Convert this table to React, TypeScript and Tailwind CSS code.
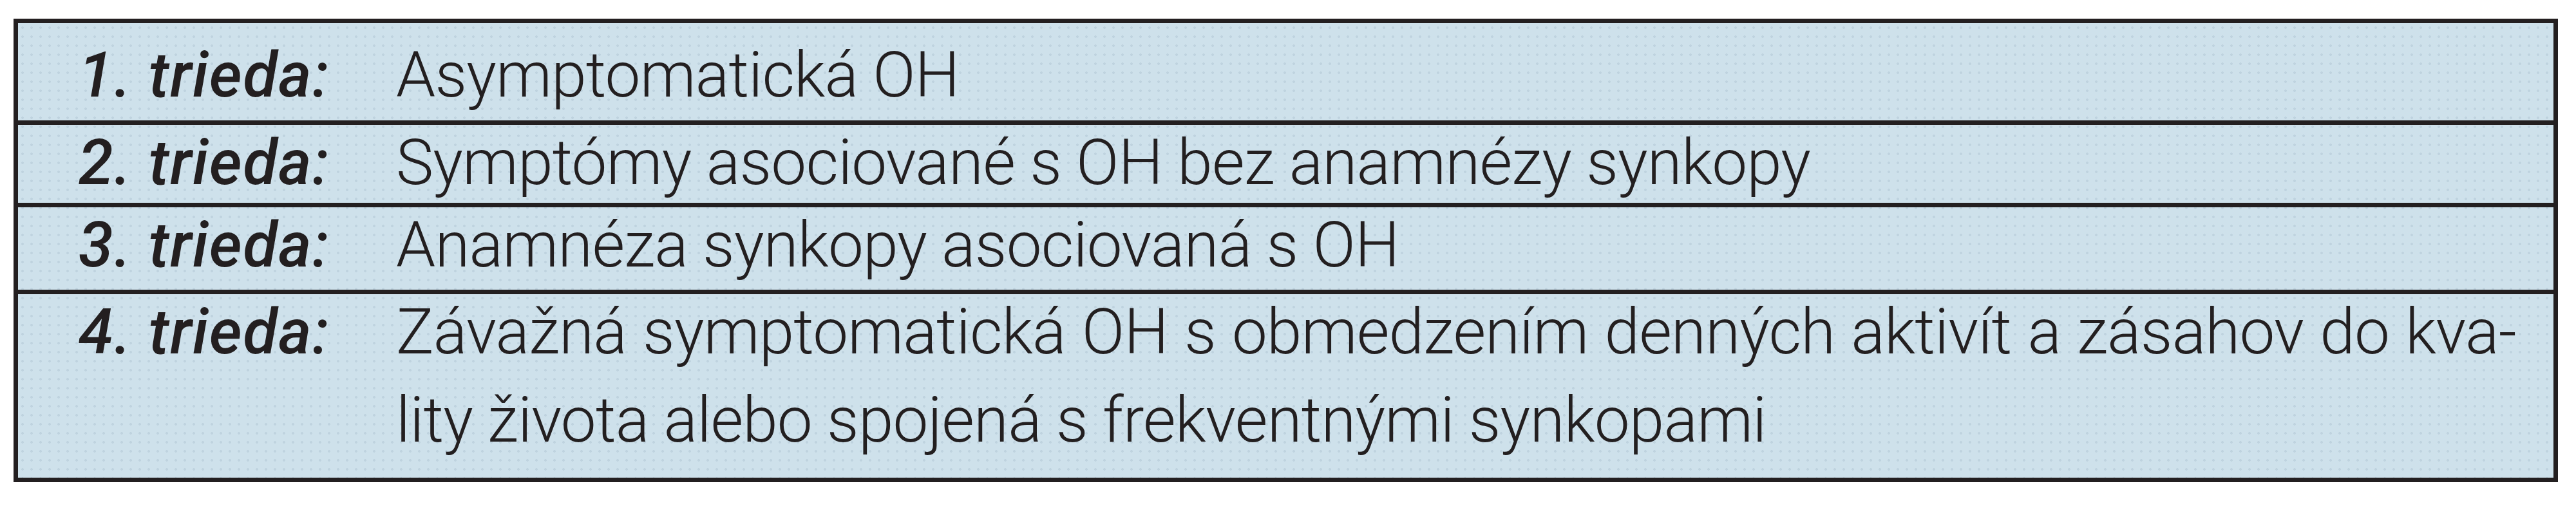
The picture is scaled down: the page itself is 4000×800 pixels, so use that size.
import React from "react";

type Row = {
  label: string;
  lines: string[];
  h: string;
  pt: string;
};

const rows: Row[] = [
  { label: "1. trieda:", lines: ["Asymptomatická OH"], h: "h-[151px]", pt: "pt-[32px]" },
  { label: "2. trieda:", lines: ["Symptómy asociované s OH bez anamnézy synkopy"], h: "h-[128px]", pt: "pt-[10px]" },
  { label: "3. trieda:", lines: ["Anamnéza synkopy asociovaná s OH"], h: "h-[135px]", pt: "pt-[10px]" },
  {
    label: "4. trieda:",
    lines: [
      "Závažná symptomatická OH s obmedzením denných aktivít a zásahov do kva-",
      "lity života alebo spojená s frekventnými synkopami",
    ],
    h: "h-[292px]",
    pt: "pt-[10px]",
  },
];

export default function App() {
  return (
    <div className="w-[4000px] h-[800px] bg-white pt-[29px] pl-[21px]">
      <div className="w-[3951px] border-[7px] border-[#231f20] bg-[#cee1eb] bg-[radial-gradient(circle,#bfd3df_1.6px,transparent_2.2px)] bg-[length:14px_14px] text-[#231f20] font-['Roboto',sans-serif] text-[98px]">
        {rows.map((r, i) => (
          <div
            key={r.label}
            className={`flex items-start ${r.h} ${r.pt} ${i > 0 ? "border-t-[7px] border-[#231f20]" : ""}`}
          >
            <div className="w-[484px] shrink-0 text-right font-medium italic leading-[98px] tracking-[1.5px]">
              {r.label}
            </div>
            <div className="pl-[103px] font-light tracking-[-0.8px] leading-[137px] -mt-[20px] whitespace-nowrap">
              {r.lines.map((l, j) => (
                <div
                  key={l}
                  className={r.lines.length > 1 && j === 0 ? "w-[3292px] text-justify [text-align-last:justify]" : ""}
                >
                  {l}
                </div>
              ))}
            </div>
          </div>
        ))}
      </div>
    </div>
  );
}
